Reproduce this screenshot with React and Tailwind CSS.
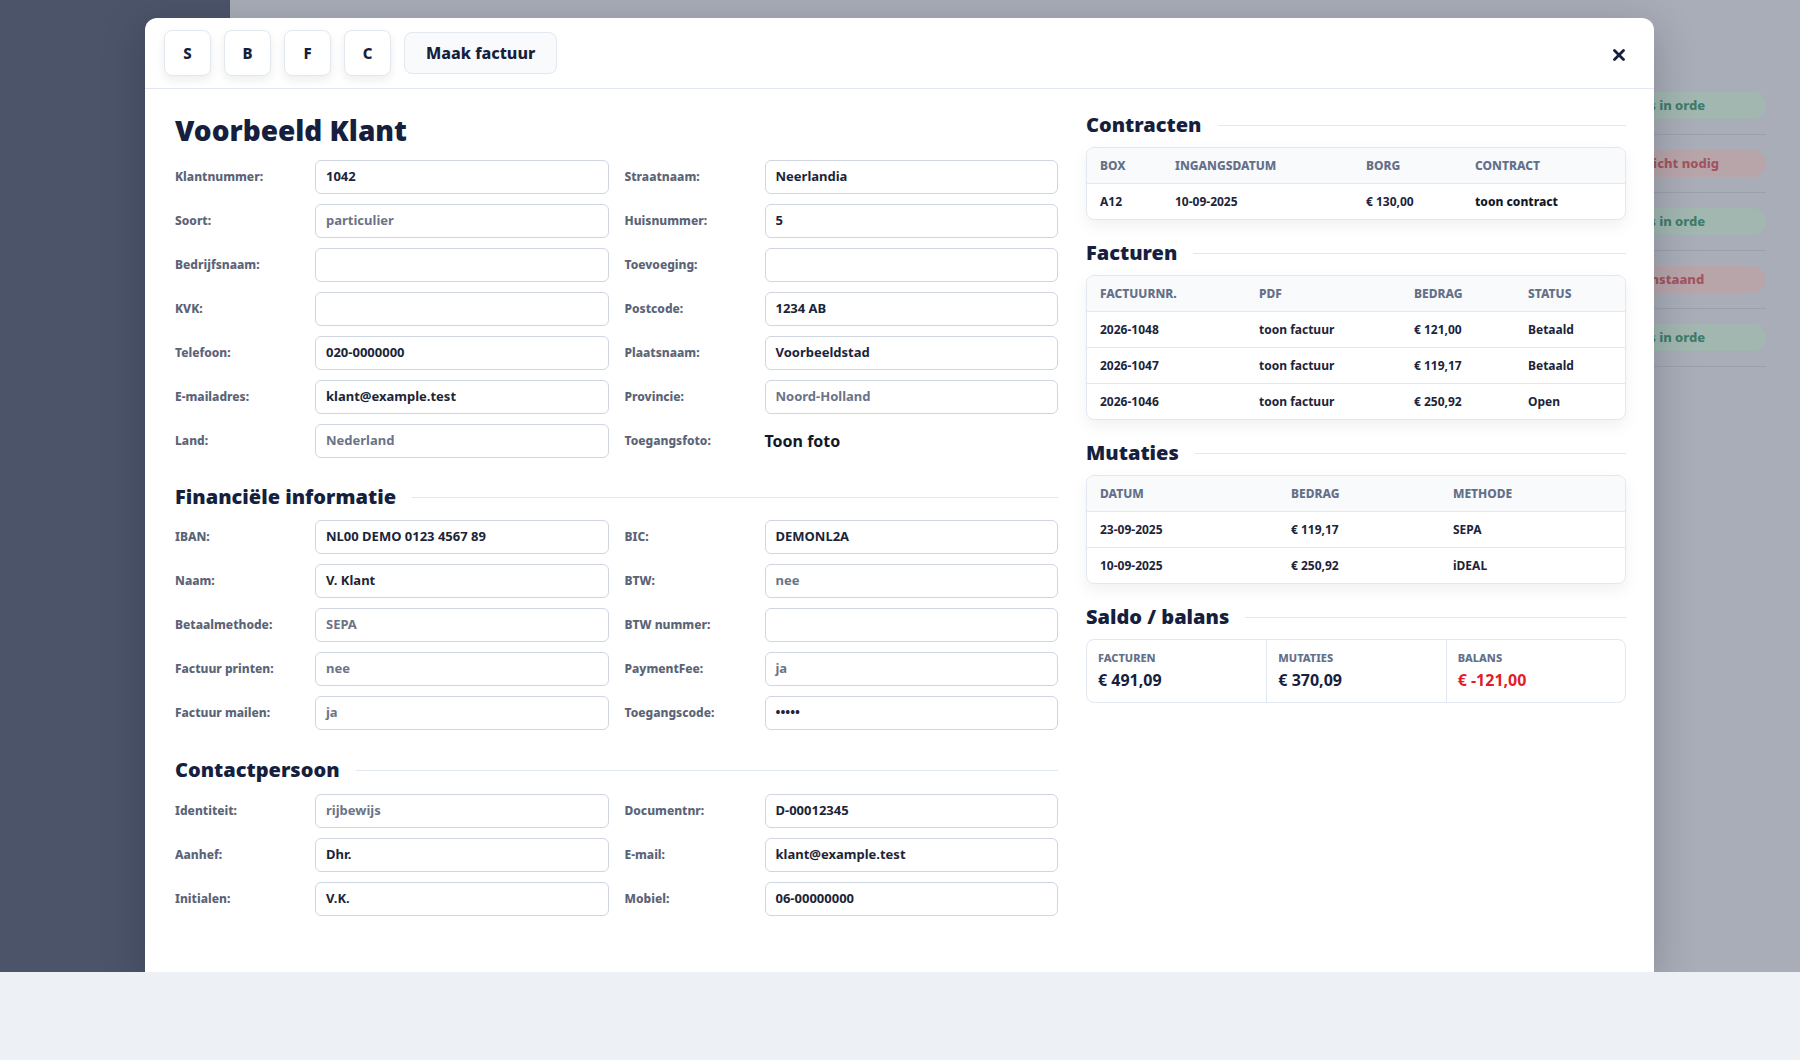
import React from "react";

const NAVY = "text-[#161f3d]";

function Field({ label, value, muted, kind }) {
  return (
    <div className="flex items-center h-[34px]">
      <div className="w-[140px] shrink-0 text-[12px] font-extrabold text-[#5b6477]">{label}</div>
      {kind === "link" ? (
        <div className="flex-1 text-[16px] font-bold text-[#111827]">{value}</div>
      ) : (
        <div
          className={`flex-1 h-[34px] flex items-center px-[10px] rounded-md border border-[#cfd6e1] bg-white text-[13px] font-bold ${
            muted ? "text-[#6b7386]" : "text-[#1c2439]"
          }`}
        >
          {value}
        </div>
      )}
    </div>
  );
}

function SectionHeading({ children, className = "" }) {
  return (
    <div className={`flex items-center gap-4 h-[28px] ${className}`}>
      <div className={`text-[20px] font-black leading-[28px] ${NAVY}`}>{children}</div>
      <div className="flex-1 h-px bg-[#e2e8f0]" />
    </div>
  );
}

function FieldGrid({ rows }) {
  return (
    <div className="grid grid-cols-2 gap-x-[16px] gap-y-[10px]">
      {rows.flat().map((f, i) => (
        <Field key={i} {...f} />
      ))}
    </div>
  );
}

function Table({ cols, head, rows }) {
  return (
    <div className="rounded-lg border border-[#e2e8f0] bg-white overflow-hidden shadow-[0_6px_16px_rgba(15,23,42,0.06)]">
      <div className={`grid ${cols} h-[35px] items-center bg-[#f8fafc]`}>
        {head.map((h) => (
          <div key={h} className="pl-[13px] text-[12px] font-extrabold uppercase text-[#64708a]">
            {h}
          </div>
        ))}
      </div>
      {rows.map((r, i) => (
        <div key={i} className={`grid ${cols} h-[36px] items-center border-t border-[#e2e8f0]`}>
          {r.map((c, j) => (
            <div key={j} className="pl-[13px] text-[12px] font-bold text-[#1c2439]">
              {c}
            </div>
          ))}
        </div>
      ))}
    </div>
  );
}

const personal = [
  [
    { label: "Klantnummer:", value: "1042" },
    { label: "Straatnaam:", value: "Neerlandia" },
  ],
  [
    { label: "Soort:", value: "particulier", muted: true },
    { label: "Huisnummer:", value: "5" },
  ],
  [
    { label: "Bedrijfsnaam:", value: "" },
    { label: "Toevoeging:", value: "" },
  ],
  [
    { label: "KVK:", value: "" },
    { label: "Postcode:", value: "1234 AB" },
  ],
  [
    { label: "Telefoon:", value: "020-0000000" },
    { label: "Plaatsnaam:", value: "Voorbeeldstad" },
  ],
  [
    { label: "E-mailadres:", value: "klant@example.test" },
    { label: "Provincie:", value: "Noord-Holland", muted: true },
  ],
  [
    { label: "Land:", value: "Nederland", muted: true },
    { label: "Toegangsfoto:", value: "Toon foto", kind: "link" },
  ],
];

const finance = [
  [
    { label: "IBAN:", value: "NL00 DEMO 0123 4567 89" },
    { label: "BIC:", value: "DEMONL2A" },
  ],
  [
    { label: "Naam:", value: "V. Klant" },
    { label: "BTW:", value: "nee", muted: true },
  ],
  [
    { label: "Betaalmethode:", value: "SEPA", muted: true },
    { label: "BTW nummer:", value: "" },
  ],
  [
    { label: "Factuur printen:", value: "nee", muted: true },
    { label: "PaymentFee:", value: "ja", muted: true },
  ],
  [
    { label: "Factuur mailen:", value: "ja", muted: true },
    { label: "Toegangscode:", value: "•••••" },
  ],
];

const contact = [
  [
    { label: "Identiteit:", value: "rijbewijs", muted: true },
    { label: "Documentnr:", value: "D-00012345" },
  ],
  [
    { label: "Aanhef:", value: "Dhr." },
    { label: "E-mail:", value: "klant@example.test" },
  ],
  [
    { label: "Initialen:", value: "V.K." },
    { label: "Mobiel:", value: "06-00000000" },
  ],
];

const bgRows = [
  { text: "Alles in orde", tone: "green" },
  { text: "Toezicht nodig", tone: "red" },
  { text: "Alles in orde", tone: "green" },
  { text: "Openstaand", tone: "red" },
  { text: "Alles in orde", tone: "green" },
];

export default function App() {
  return (
    <div className="w-[1800px] h-[1060px] bg-[#edf0f5] overflow-hidden font-['Noto_Sans',sans-serif]">
      <div className="relative h-[972px] flex overflow-hidden">
        {/* background page (dimmed) */}
        <div className="w-[230px] shrink-0 bg-[#4b5469]" />
        <div className="flex-1 bg-[#a9adb7] flex justify-end">
          <div className="w-[166px] mr-[34px] pt-[77px] flex flex-col">
            {bgRows.map((r, i) => (
              <div key={i} className="h-[58px] flex items-center border-b border-[#9ca0aa]">
                <div
                  className={`w-full h-[27px] rounded-full flex items-center pl-[24px] text-[13px] font-extrabold ${
                    r.tone === "green" ? "bg-[#a2b7b0] text-[#3f7b69]" : "bg-[#b8a5aa] text-[#a2545e]"
                  }`}
                >
                  {r.text}
                </div>
              </div>
            ))}
          </div>
        </div>

        {/* modal */}
        <div className="absolute left-[145px] top-[18px] bottom-0 w-[1509px] bg-white rounded-t-xl shadow-[0_10px_40px_rgba(15,23,42,0.25)]">
          <div className="h-[71px] flex items-center px-[19px] border-b border-[#e2e8f0]">
            <div className="flex items-center gap-[13px]">
              {["S", "B", "F", "C"].map((l) => (
                <div
                  key={l}
                  className={`w-[47px] h-[46px] rounded-lg border border-[#e2e8f0] bg-white shadow-[0_4px_10px_rgba(15,23,42,0.08)] flex items-center justify-center text-[15px] font-extrabold ${NAVY}`}
                >
                  {l}
                </div>
              ))}
              <div
                className={`h-[42px] px-[21px] rounded-lg border border-[#e2e8f0] bg-[#f8fafc] flex items-center text-[16px] font-extrabold ${NAVY}`}
              >
                Maak factuur
              </div>
            </div>
            <div className="ml-auto mr-[10px] mt-[3px]">
              <svg width="12" height="12" viewBox="0 0 12 12">
                <path d="M1.5 1.5 L10.5 10.5 M10.5 1.5 L1.5 10.5" stroke="#161f3d" strokeWidth="2.8" strokeLinecap="round" />
              </svg>
            </div>
          </div>

          <div className="flex pl-[30px] pr-[28px] gap-[28px] pt-[22px]">
            {/* left */}
            <div className="w-[883px] shrink-0">
              <div className={`text-[28px] font-black leading-[38px] mb-[11px] ${NAVY}`}>Voorbeeld Klant</div>
              <FieldGrid rows={personal} />
              <SectionHeading className="mt-[25px] mb-[9px]">Financiële informatie</SectionHeading>
              <FieldGrid rows={finance} />
              <SectionHeading className="mt-[26px] mb-[10px]">Contactpersoon</SectionHeading>
              <FieldGrid rows={contact} />
            </div>

            {/* right */}
            <div className="w-[540px] shrink-0">
              <SectionHeading className="mb-[8px]">Contracten</SectionHeading>
              <Table
                cols="grid-cols-[75px_191px_109px_1fr]"
                head={["Box", "Ingangsdatum", "Borg", "Contract"]}
                rows={[["A12", "10-09-2025", "€ 130,00", <span className="font-extrabold text-[#111827]">toon contract</span>]]}
              />
              <SectionHeading className="mt-[19px] mb-[8px]">Facturen</SectionHeading>
              <Table
                cols="grid-cols-[159px_155px_114px_1fr]"
                head={["Factuurnr.", "PDF", "Bedrag", "Status"]}
                rows={[
                  ["2026-1048", "toon factuur", "€ 121,00", "Betaald"],
                  ["2026-1047", "toon factuur", "€ 119,17", "Betaald"],
                  ["2026-1046", "toon factuur", "€ 250,92", "Open"],
                ]}
              />
              <SectionHeading className="mt-[19px] mb-[8px]">Mutaties</SectionHeading>
              <Table
                cols="grid-cols-[191px_162px_1fr]"
                head={["Datum", "Bedrag", "Methode"]}
                rows={[
                  ["23-09-2025", "€ 119,17", "SEPA"],
                  ["10-09-2025", "€ 250,92", "iDEAL"],
                ]}
              />
              <SectionHeading className="mt-[19px] mb-[8px]">Saldo / balans</SectionHeading>
              <div className="grid grid-cols-3 rounded-lg border border-[#e2e8f0] bg-white">
                {[
                  ["Facturen", "€ 491,09", false],
                  ["Mutaties", "€ 370,09", false],
                  ["Balans", "€ -121,00", true],
                ].map(([l, v, red], i) => (
                  <div key={l} className={`px-[11px] pt-[10px] pb-[11px] ${i > 0 ? "border-l border-[#e2e8f0]" : ""}`}>
                    <div className="text-[11px] leading-[15px] font-extrabold uppercase text-[#64708a]">{l}</div>
                    <div
                      className={`mt-[4px] text-[16px] leading-[22px] font-bold ${
                        red ? "text-[#e11d2a]" : "text-[#161f3d]"
                      }`}
                    >
                      {v}
                    </div>
                  </div>
                ))}
              </div>
            </div>
          </div>
        </div>
      </div>
    </div>
  );
}
